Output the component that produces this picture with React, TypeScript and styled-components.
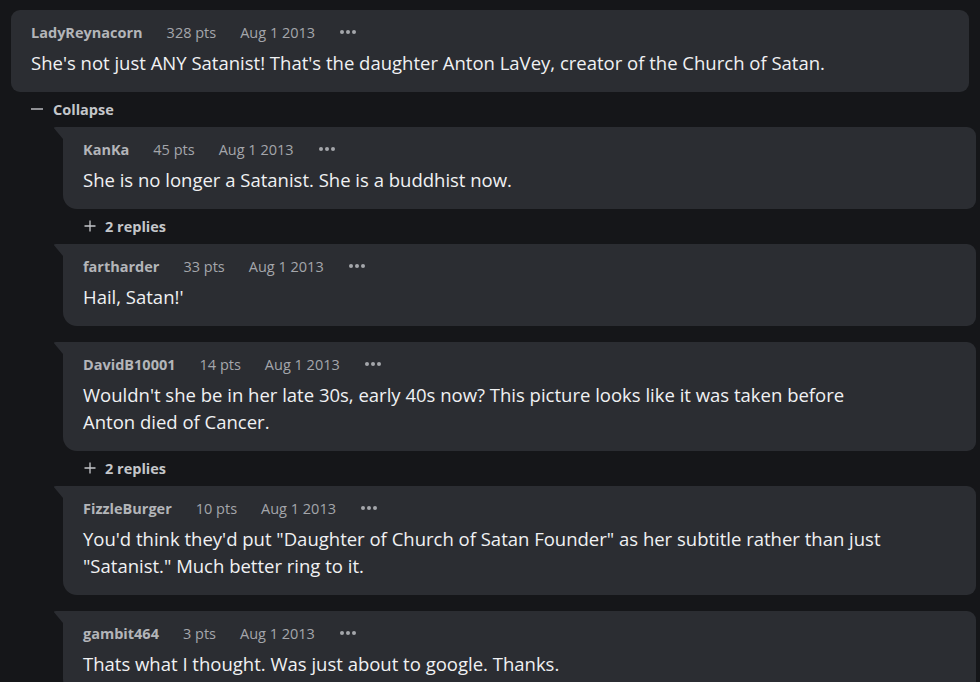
import React from "react";
import styled, { createGlobalStyle } from "styled-components";

const Global = createGlobalStyle`
  html, body { margin: 0; padding: 0; background: #151619; }
  body { font-family: "Open Sans", "Noto Sans", sans-serif; overflow: hidden; }
`;

const Page = styled.div`
  width: 980px;
  height: 682px;
  overflow: hidden;
  background: #151619;
  box-sizing: border-box;
  padding: 10px 11px 0 11px;
`;

const Card = styled.div<{ $nested?: boolean }>`
  position: relative;
  flex-shrink: 0;
  background: #2b2d32;
  border-radius: ${(p) => (p.$nested ? "0 9px 9px 14px" : "9px")};
  padding: 13px 88px 16px 20px;
  display: flex;
  flex-direction: column;
  gap: 8px;
  ${(p) =>
    p.$nested &&
    `
    &::before {
      content: "";
      position: absolute;
      left: -10px;
      top: 0;
      width: 10px;
      height: 12px;
      background: #2b2d32;
      clip-path: polygon(0 0, 100% 0, 100% 100%);
      border-top-left-radius: 3px;
    }
  `}
`;

const Meta = styled.div`
  display: flex;
  align-items: center;
  gap: 24px;
  height: 18px;
  font-size: 14.5px;
  color: #a4a6ab;
`;

const User = styled.span`
  font-weight: 700;
  color: #b3b5b9;
`;

const Dots = styled.span`
  display: flex;
  gap: 2px;
  padding-left: 1px;
  & > i {
    width: 4px;
    height: 4px;
    border-radius: 50%;
    background: #a4a6ab;
  }
`;

const Body = styled.div`
  font-size: 18.5px;
  font-weight: 500;
  line-height: 27px;
  color: #f0f1f3;
`;

const Toggle = styled.div<{ $indent: number }>`
  flex-shrink: 0;
  height: 35px;
  display: flex;
  align-items: center;
  gap: 9px;
  padding-left: ${(p) => p.$indent}px;
  padding-bottom: 1px;
  box-sizing: border-box;
  font-size: 14.5px;
  font-weight: 700;
  color: #c4c6ca;
`;

const Nested = styled.div`
  display: flex;
  flex-direction: column;
  margin-left: 52px;
  margin-right: -7px;
`;

const Comment = styled.div<{ $gap: boolean }>`
  display: flex;
  flex-direction: column;
  margin-bottom: ${(p) => (p.$gap ? 16 : 0)}px;
`;

const Minus = () => (
  <svg width="14" height="14" viewBox="0 0 14 14">
    <path d="M1 7h12" stroke="#c4c6ca" strokeWidth="1.4" />
  </svg>
);
const Plus = () => (
  <svg width="12" height="12" viewBox="0 0 12 12">
    <path d="M0.5 6h11M6 0.5v11" stroke="#c4c6ca" strokeWidth="1.3" />
  </svg>
);

type C = { user: string; pts: number; text: string; replies?: number };

const CommentCard = ({ c, nested }: { c: C; nested?: boolean }) => (
  <Card $nested={nested}>
    <Meta>
      <User>{c.user}</User>
      <span>{c.pts} pts</span>
      <span>Aug 1 2013</span>
      <Dots>
        <i />
        <i />
        <i />
      </Dots>
    </Meta>
    <Body>{c.text}</Body>
  </Card>
);

const children: C[] = [
  { user: "KanKa", pts: 45, text: "She is no longer a Satanist. She is a buddhist now.", replies: 2 },
  { user: "fartharder", pts: 33, text: "Hail, Satan!'" },
  {
    user: "DavidB10001",
    pts: 14,
    text: "Wouldn't she be in her late 30s, early 40s now? This picture looks like it was taken before Anton died of Cancer.",
    replies: 2,
  },
  {
    user: "FizzleBurger",
    pts: 10,
    text: "You'd think they'd put \"Daughter of Church of Satan Founder\" as her subtitle rather than just \"Satanist.\" Much better ring to it.",
  },
  { user: "gambit464", pts: 3, text: "Thats what I thought. Was just about to google. Thanks." },
];

export default function App() {
  return (
    <>
      <Global />
      <Page>
        <CommentCard
          c={{
            user: "LadyReynacorn",
            pts: 328,
            text: "She's not just ANY Satanist! That's the daughter Anton LaVey, creator of the Church of Satan.",
          }}
        />
        <Toggle $indent={19}>
          <Minus />
          Collapse
        </Toggle>
        <Nested>
          {children.map((c) => (
            <Comment key={c.user} $gap={!c.replies}>
              <CommentCard c={c} nested />
              {c.replies ? (
                <Toggle $indent={21}>
                  <Plus />
                  {c.replies} replies
                </Toggle>
              ) : null}
            </Comment>
          ))}
        </Nested>
      </Page>
    </>
  );
}
